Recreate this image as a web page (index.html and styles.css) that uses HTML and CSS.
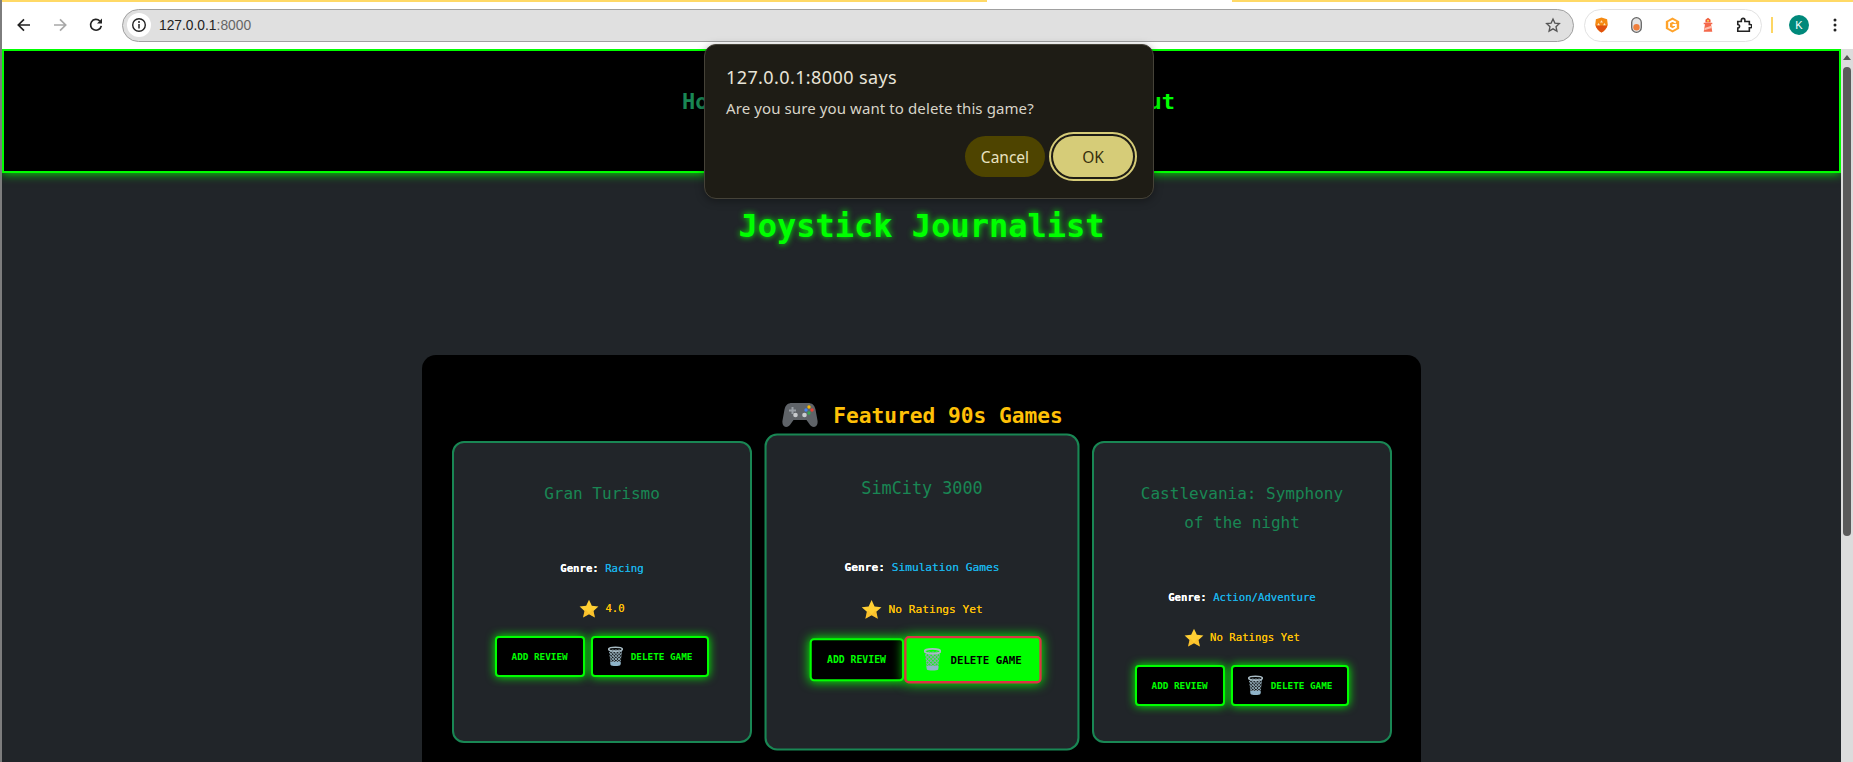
FILE: index.html
```html
<!DOCTYPE html>
<html lang="en">
<head>
  <meta charset="UTF-8" />
  <meta name="viewport" content="width=device-width, initial-scale=1.0"/>
  <title>Joystick Journalist</title>
  <link rel="stylesheet" href="styles.css">
</head>
<body>

  <svg class="defs" width="0" height="0" aria-hidden="true">
    <defs>
      <symbol id="star" viewBox="0 0 24 24">
        <path fill="#ffcf33" d="M12 .8l3.400 7.300 7.900.9-5.900 5.300 1.700 7.900L12 18.200l-7.100 4 1.700-7.900L.7 9l7.900-.9z"/>
        <path fill="#f4a91f" d="M12 18.200l-7.100 4 1.700-7.900 1.500-1.300 3.900 4.400 3.900-4.400 1.500 1.300 1.700 7.900z" opacity=".35"/>
      </symbol>
      <pattern id="mesh" width="2.400" height="2.400" patternUnits="userSpaceOnUse" patternTransform="rotate(45)">
        <path d="M0 1.200H2.400M1.200 0V2.400" stroke="#8ea6b2" stroke-width="1" fill="none"/>
      </pattern>
      <symbol id="trash" viewBox="0 0 16 22">
        <path fill="url(#mesh)" d="M.8 3.500h14.400L13.200 19.500H2.800z"/>
        <path fill="#8fb4c9" d="M2.400 16.800h11.200L13.200 20c-.8 1.400-9.600 1.400-10.400 0z"/>
        <ellipse cx="8" cy="3.200" rx="7.300" ry="2.200" fill="none" stroke="#a9bcc5" stroke-width="1.600"/>
      </symbol>
    </defs>
  </svg>

  <div class="stripe"><span class="stripe-gap"></span></div>

  <div class="toolbar">
    <span class="tool-btn">
      <svg width="16" height="16" viewBox="0 0 16 16"><path d="M14 8H2.500M8 2.300L2.300 8 8 13.700" fill="none" stroke="#222" stroke-width="1.700"/></svg>
    </span>
    <span class="tool-btn">
      <svg width="16" height="16" viewBox="0 0 16 16"><path d="M2 8h11.500M8 2.300L13.700 8 8 13.700" fill="none" stroke="#a8a8a8" stroke-width="1.700"/></svg>
    </span>
    <span class="tool-btn">
      <svg width="16" height="16" viewBox="0 0 16 16"><path d="M13.300 8.800A5.400 5.400 0 1 1 11.800 4" fill="none" stroke="#222" stroke-width="1.700"/><path d="M14 1.500v5h-5z" fill="#222"/></svg>
    </span>

    <div class="address">
      <span class="info-badge">
        <svg width="16" height="16" viewBox="0 0 16 16"><circle cx="8" cy="8" r="6.300" fill="none" stroke="#222" stroke-width="1.400"/><path d="M8 7v4.500" stroke="#222" stroke-width="1.500"/><circle cx="8" cy="4.900" r="1" fill="#222"/></svg>
      </span>
      <span class="url">127.0.0.1<span class="url-port">:8000</span></span>
      <svg class="bookmark" width="16" height="16" viewBox="0 0 24 24"><path d="M12 3l2.800 6.200 6.700.7-5 4.600 1.400 6.700L12 17.800l-5.900 3.400 1.400-6.700-5-4.600 6.700-.7z" fill="none" stroke="#555" stroke-width="2"/></svg>
    </div>

    <div class="extensions">
      <svg width="15" height="16" viewBox="0 0 18 20">
        <path d="M9 .5l7 2.400.8 6.100C16.500 13.500 12.500 17.500 9 19.500 5.500 17.500 1.500 13.500 1.200 9L2 2.900z" fill="#f58a12"/>
        <path d="M1.500 10.500h15C15.500 14 12.300 17.600 9 19.500 5.700 17.600 2.500 14 1.500 10.500z" fill="#e0500f"/>
        <path d="M9 4l1.800 3H7.200zM5.300 7.500L7 10.400H3.600zM12.700 7.500l1.700 2.900H11z" fill="#ffe6c4"/>
      </svg>
      <svg width="11" height="16" viewBox="0 0 11 16">
        <rect x=".7" y=".7" width="9.600" height="14.600" rx="4.800" fill="#e4e4e4" stroke="#666" stroke-width="1.300"/>
        <circle cx="5.500" cy="10.300" r="3.200" fill="#ef7f3c"/>
      </svg>
      <svg width="15" height="16" viewBox="0 0 16 18">
        <path d="M8 .5l7.500 4.300v8.400L8 17.500.5 13.200V4.800z" fill="#ffa32b"/>
        <path d="M11.800 6.300L8 4.200 4.200 6.300v5.400L8 13.800l3.800-2.100V9H8" fill="none" stroke="#fff" stroke-width="2"/>
      </svg>
      <svg width="12" height="16" viewBox="0 0 14 18">
        <path d="M7 .5L10 3v3H4V3z" fill="#ef5a3c"/>
        <circle cx="7" cy="4" r="1.200" fill="#ffd84d"/>
        <path d="M2 6.500h10v1.500H2zM3.500 8h7l1.500 9H2z" fill="#f4694c"/>
        <path d="M3 12.500l8-2.500.4 2.500-8.800 2.700z" fill="#ffc2b0"/>
      </svg>
      <svg width="16" height="16" viewBox="0 0 18 18">
        <path d="M2 5h4V3.500a2 2 0 0 1 4 0V5h5v3.500h1a1.800 1.800 0 0 1 0 3.600h-1V16H2v-3.500a2 2 0 0 0 0-4z" fill="none" stroke="#222" stroke-width="1.800"/>
      </svg>
    </div>

    <span class="tool-divider"></span>
    <span class="avatar">K</span>
    <svg class="menu-dots" width="4" height="14" viewBox="0 0 4 14"><circle cx="2" cy="2" r="1.500" fill="#222"/><circle cx="2" cy="7" r="1.500" fill="#222"/><circle cx="2" cy="12" r="1.500" fill="#222"/></svg>
  </div>

  <div class="viewport">
    <div class="page">
      <header class="site-header">
        <nav class="site-nav">
          <a class="nav-link nav-link-active" href="#">Home</a>
          <a class="nav-link" href="#">About</a>
        </nav>
      </header>

      <h1 class="site-title">Joystick Journalist</h1>

      <section class="panel">
        <h2 class="panel-title">
          <svg width="36" height="26" viewBox="0 0 36 26">
            <path d="M10 1h16c4 0 6.500 2 7.500 6.500l2 11c.6 4-1 6.500-3.500 6.500-2.200 0-3.600-1.300-5-3.500L24.500 18h-13L9 21.500C7.600 23.700 6.200 25 4 25c-2.500 0-4.100-2.500-3.500-6.500l2-11C3.500 3 6 1 10 1z" fill="#5f6368"/>
            <path d="M9.500 5h2v2.500H14v2h-2.500V12h-2V9.500H7v-2h2.500z" fill="#9aa0a6"/>
            <circle cx="13.500" cy="13" r="2.300" fill="#c8cbce"/>
            <circle cx="22.500" cy="13" r="2.300" fill="#c8cbce"/>
            <circle cx="27" cy="5" r="1.700" fill="#fbbc04"/>
            <circle cx="24" cy="8" r="1.700" fill="#4285f4"/>
            <circle cx="30" cy="8" r="1.700" fill="#ea4335"/>
            <circle cx="27" cy="11" r="1.700" fill="#34a853"/>
          </svg>
          <span>Featured 90s Games</span>
        </h2>

        <div class="game-grid">
          <article class="game-card">
            <h3 class="game-name">Gran Turismo</h3>
            <p class="game-genre"><strong>Genre:</strong> <span class="genre-value">Racing</span></p>
            <p class="game-rating"><svg width="20" height="20"><use href="#star"/></svg><span>4.0</span></p>
            <div class="game-actions">
              <a class="retro-btn" href="#">Add Review</a>
              <a class="retro-btn" href="#"><svg width="15" height="21"><use href="#trash"/></svg>Delete Game</a>
            </div>
          </article>

          <article class="game-card game-card-hover">
            <h3 class="game-name">SimCity 3000</h3>
            <p class="game-genre"><strong>Genre:</strong> <span class="genre-value">Simulation Games</span></p>
            <p class="game-rating"><svg width="20" height="20"><use href="#star"/></svg><span>No Ratings Yet</span></p>
            <div class="game-actions">
              <a class="retro-btn" href="#">Add Review</a>
              <a class="retro-btn retro-btn-hover" href="#"><svg width="15" height="21"><use href="#trash"/></svg>Delete Game</a>
            </div>
          </article>

          <article class="game-card">
            <h3 class="game-name">Castlevania: Symphony of the night</h3>
            <p class="game-genre"><strong>Genre:</strong> <span class="genre-value">Action/Adventure</span></p>
            <p class="game-rating"><svg width="20" height="20"><use href="#star"/></svg><span>No Ratings Yet</span></p>
            <div class="game-actions">
              <a class="retro-btn" href="#">Add Review</a>
              <a class="retro-btn" href="#"><svg width="15" height="21"><use href="#trash"/></svg>Delete Game</a>
            </div>
          </article>
        </div>
      </section>
    </div>

    <div class="scrollbar">
      <span class="scroll-arrow"></span>
      <span class="scroll-thumb"></span>
    </div>
  </div>

  <div class="confirm-box">
    <div class="confirm-title">127.0.0.1:8000 says</div>
    <div class="confirm-text">Are you sure you want to delete this game?</div>
    <div class="confirm-actions">
      <button class="confirm-btn">Cancel</button>
      <button class="confirm-btn confirm-btn-ok">OK</button>
    </div>
  </div>

</body>
</html>
```

FILE: styles.css
```css
* {
  box-sizing: border-box;
}
html, body {
  height: 100%;
}
body {
  margin: 0;
  overflow: hidden;
  display: flex;
  flex-direction: column;
  background: #fff;
  border-left: 2px solid #7d7d7d;
  font-family: "DejaVu Sans Mono", "Liberation Mono", monospace;
}
.defs {
  position: absolute;
}

/* browser chrome */
.stripe {
  height: 2px;
  flex: none;
  background: #ffd966;
  display: flex;
}
.stripe-gap {
  width: 245px;
  margin-left: 985px;
  background: #fff;
}
.toolbar {
  height: 47px;
  flex: none;
  display: flex;
  align-items: center;
  padding: 0 16px 1px 4px;
  background: #fff;
  font-family: "Liberation Sans", Arial, sans-serif;
}
.tool-btn {
  width: 36px;
  display: flex;
  justify-content: center;
}
.address {
  flex: 1;
  height: 33px;
  margin-left: 8px;
  display: flex;
  align-items: center;
  padding: 0 12px 0 4px;
  background: #e0e0e0;
  border: 1px solid #a0a0a0;
  border-radius: 17px;
}
.info-badge {
  width: 24px;
  height: 24px;
  display: flex;
  align-items: center;
  justify-content: center;
  background: #fff;
  border-radius: 50%;
}
.url {
  margin-left: 8px;
  font-size: 13.8px;
  color: #222;
}
.url-port {
  color: #666;
}
.bookmark {
  margin-left: auto;
}
.extensions {
  width: 178px;
  height: 33px;
  margin-left: 10px;
  display: flex;
  align-items: center;
  justify-content: space-between;
  padding: 0 9px;
  border: 1px solid #e2e2e2;
  border-radius: 17px;
}
.tool-divider {
  width: 2px;
  height: 16px;
  margin-left: 9px;
  background: #fdd663;
}
.avatar {
  width: 20px;
  height: 20px;
  margin-left: 16px;
  display: flex;
  align-items: center;
  justify-content: center;
  background: #00897b;
  color: #fff;
  font-size: 11px;
  border-radius: 50%;
}
.menu-dots {
  margin-left: 24px;
}

/* page */
.viewport {
  flex: 1;
  min-height: 0;
  display: flex;
}
.page {
  flex: 1;
  min-width: 0;
  overflow: hidden;
  background: #212529;
}
.site-header {
  height: 124px;
  padding-top: 36px;
  background: #000;
  border: 2px solid #0f0;
  box-shadow: 0 0 10px #0f0;
}
.site-nav {
  width: 493px;
  margin: 0 auto;
  transform: translateX(7px);
  display: flex;
  justify-content: space-between;
}
.nav-link {
  font-size: 22px;
  line-height: 30px;
  font-weight: bold;
  color: #0f0;
  text-decoration: none;
}
.nav-link-active {
  color: #198754;
}
.site-title {
  margin: 33px 0 0;
  font-size: 32px;
  line-height: 40px;
  text-align: center;
  color: #0f0;
  text-shadow: 0 0 6px #0f0;
}
.panel {
  width: 999px;
  margin: 109px auto 0;
  padding: 45px 30px 40px;
  background: #000;
  border-radius: 14px;
}
.panel-title {
  margin: 0 0 11px;
  padding: 1px 0 0 2px;
  height: 30px;
  display: flex;
  align-items: center;
  justify-content: center;
  gap: 15px;
  font-size: 21.2px;
  line-height: 30px;
  font-weight: bold;
  color: #ffc107;
}
.panel-title svg {
  margin-top: -2px;
}
.game-grid {
  display: grid;
  grid-template-columns: repeat(3, 300px);
  gap: 20px;
}
.game-card {
  height: 302px;
  padding: 36px 30px 0;
  text-align: center;
  background: #212529;
  border: 2px solid #198754;
  border-radius: 12px;
}
.game-card-hover {
  transform: scale(1.05);
}
.game-name {
  margin: 0 0 51px;
  padding: 0 4px;
  font-size: 16px;
  line-height: 29px;
  font-weight: normal;
  color: #198754;
}
.game-genre {
  margin: 0 0 21px;
  font-size: 10.67px;
  line-height: 19px;
  color: #fff;
  text-shadow: 0 0 .5px currentColor;
}
.genre-value {
  color: #1ab2e8;
}
.game-rating {
  height: 19px;
  margin: 0 0 18px;
  display: flex;
  align-items: center;
  justify-content: center;
  gap: 6px;
  font-size: 10.67px;
  line-height: 19px;
  color: #ffc107;
  text-shadow: 0 0 .5px currentColor;
}
.game-actions {
  display: flex;
  justify-content: center;
  gap: 6px;
  margin: 0 -20px;
}
.retro-btn {
  height: 41px;
  padding: 0 15px;
  display: flex;
  align-items: center;
  gap: 8px;
  font-size: 9.33px;
  font-weight: bold;
  text-transform: uppercase;
  text-decoration: none;
  color: #0f0;
  background: #000;
  border: 2px solid #0f0;
  border-radius: 4px;
  box-shadow: 0 0 10px #0f0;
}
.retro-btn-hover {
  transform: scale(1.1);
  color: #000;
  background: #0f0;
  border-color: #dc3545;
}

/* scrollbar */
.scrollbar {
  width: 12px;
  flex: none;
  display: flex;
  flex-direction: column;
  align-items: center;
  padding-top: 6px;
  background: #dcdcdc;
}
.scroll-arrow {
  width: 0;
  height: 0;
  border-left: 4px solid transparent;
  border-right: 4px solid transparent;
  border-bottom: 5px solid #555;
}
.scroll-thumb {
  width: 8px;
  height: 469px;
  margin-top: 7px;
  background: #5a5a5a;
  border-radius: 4px;
}

/* confirm dialog */
.confirm-box {
  position: absolute;
  top: 44px;
  left: 704px;
  width: 450px;
  height: 155px;
  padding: 20px 20px 0 21px;
  font-family: "Noto Sans", "Open Sans", sans-serif;
  background: #1e1c15;
  border: 1px solid #454238;
  border-radius: 12px;
  box-shadow: 0 2px 8px rgba(0, 0, 0, .35);
}
.confirm-title {
  font-size: 18px;
  line-height: 25px;
  letter-spacing: .4px;
  color: #e8e4d8;
}
.confirm-text {
  margin-top: 8px;
  font-size: 15px;
  line-height: 20px;
  letter-spacing: .1px;
  color: #d8d4c8;
}
.confirm-actions {
  margin-top: 18px;
  display: flex;
  justify-content: flex-end;
  gap: 8px;
}
.confirm-btn {
  width: 80px;
  height: 41px;
  padding: 0;
  font-family: inherit;
  font-size: 15.5px;
  color: #e8e2c0;
  background: #4e4400;
  border: none;
  border-radius: 21px;
}
.confirm-btn-ok {
  color: #36300c;
  background: #d6cc78;
  outline: 2px solid #d6cc78;
  outline-offset: 2px;
}
```
